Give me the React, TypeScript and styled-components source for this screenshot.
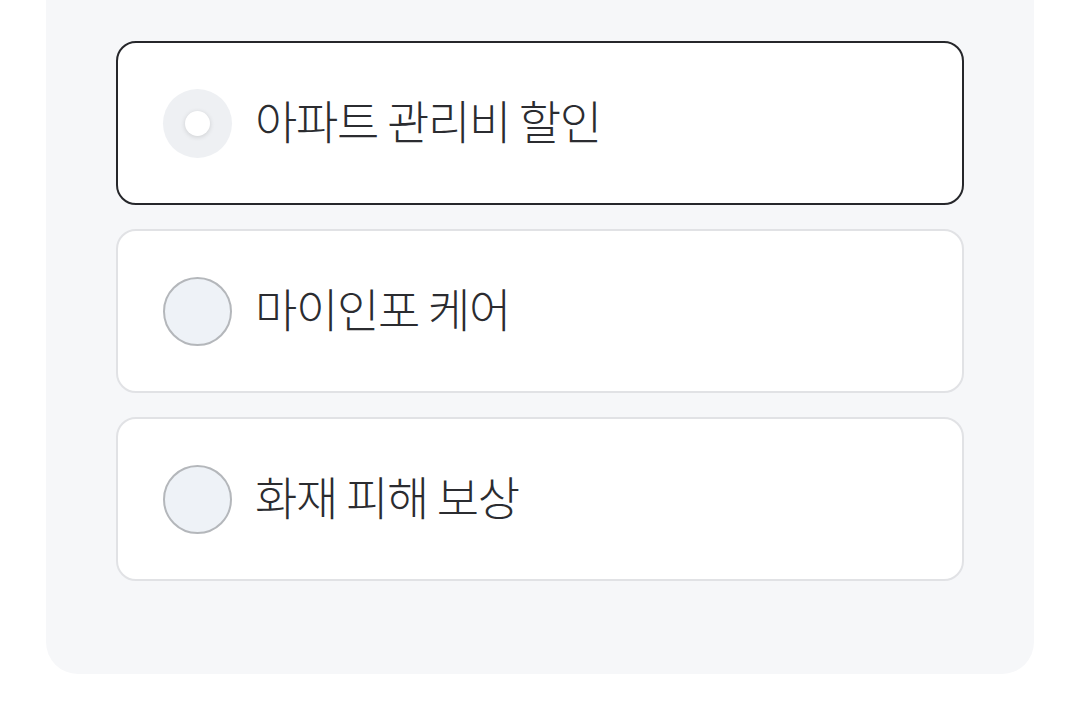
import React, { useState } from "react";
import styled, { createGlobalStyle } from "styled-components";

const Global = createGlobalStyle`
  html, body { margin: 0; padding: 0; background: #ffffff; }
  body { font-family: "Noto Sans CJK KR", "Noto Sans", sans-serif; }
`;

const Panel = styled.div`
  margin-left: 46px;
  width: 988px;
  box-sizing: border-box;
  background: #f6f7f9;
  border-radius: 0 0 32px 32px;
  padding: 41px 70px 93px;
  display: flex;
  flex-direction: column;
  gap: 24px;
`;

const Card = styled.label<{ $selected: boolean }>`
  box-sizing: border-box;
  height: 164px;
  background: #ffffff;
  border-radius: 20px;
  border: 2px solid ${(p) => (p.$selected ? "#26272b" : "#e1e2e5")};
  display: flex;
  align-items: center;
  padding-left: 45px;
  gap: 23px;
  cursor: pointer;
`;

const Radio = styled.span<{ $selected: boolean }>`
  box-sizing: border-box;
  width: 69px;
  height: 69px;
  border-radius: 50%;
  flex: none;
  display: flex;
  align-items: center;
  justify-content: center;
  background: ${(p) => (p.$selected ? "#eef0f3" : "#eef2f7")};
  border: ${(p) => (p.$selected ? "none" : "2px solid #b4b7bb")};
`;

const Dot = styled.span`
  width: 25px;
  height: 25px;
  border-radius: 50%;
  background: #ffffff;
  box-shadow: 0 1px 5px rgba(0, 0, 0, 0.14);
`;

const Label = styled.span`
  font-size: 46px;
  font-weight: 300;
  color: #2b2c30;
  letter-spacing: -1.3px;
  line-height: 1;
  margin-top: -8px;
`;

const options = ["아파트 관리비 할인", "마이인포 케어", "화재 피해 보상"];

export default function App() {
  const [sel, setSel] = useState(0);
  return (
    <>
      <Global />
      <Panel>
        {options.map((o, i) => (
          <Card key={o} $selected={sel === i} onClick={() => setSel(i)}>
            <Radio $selected={sel === i}>{sel === i && <Dot />}</Radio>
            <Label>{o}</Label>
          </Card>
        ))}
      </Panel>
    </>
  );
}
